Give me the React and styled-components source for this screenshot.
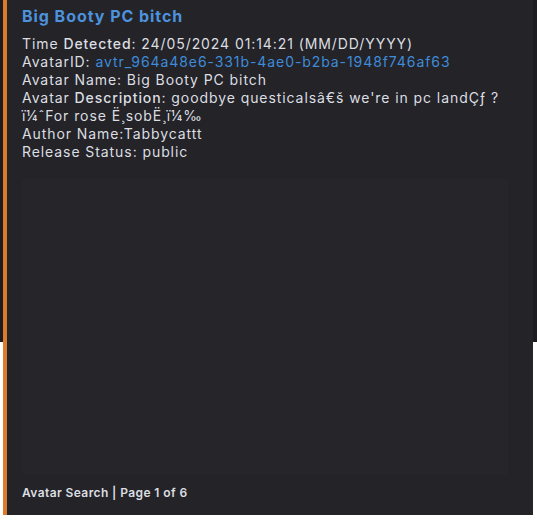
import React from "react";
import styled, { createGlobalStyle } from "styled-components";

const Global = createGlobalStyle`
  html, body { margin: 0; padding: 0; }
  body {
    background: linear-gradient(#1d1d21 0, #1d1d21 342px, #ffffff 342px);
    min-height: 521px;
    font-family: Inter, "Noto Sans", sans-serif;
  }
`;

const Page = styled.div`
  width: 537px;
  height: 521px;
  padding-left: 3px;
  box-sizing: border-box;
`;

const Card = styled.article`
  width: 530px;
  height: 515px;
  box-sizing: border-box;
  background: #232328;
  border-left: 4px solid #db7b2c;
  padding: 5px 16px 0 15px;
  display: flex;
  flex-direction: column;
  -webkit-font-smoothing: antialiased;
`;

const Title = styled.div`
  color: #4d92dd;
  font-weight: 700;
  font-size: 16px;
  line-height: 22px;
  letter-spacing: 0.95px;
`;

const Fields = styled.div`
  margin-top: 7.5px;
  color: #dcdee1;
  font-size: 14px;
  line-height: 18.1px;
  letter-spacing: 0.92px;
`;

const Line = styled.div`
  white-space: nowrap;
`;

const Strong = styled.span`
  font-weight: 500;
`;

const Link = styled.span`
  color: #3f8bd9;
`;

const ImageBox = styled.div`
  margin-top: 18px;
  width: 486px;
  height: 296px;
  background: #25252a;
  border-radius: 3px;
`;

const Footer = styled.div`
  margin-top: 10px;
  color: #dcdee1;
  font-size: 12px;
  font-weight: 600;
  line-height: 16px;
  letter-spacing: 0.4px;
`;

export default function App() {
  return (
    <Page>
      <Global />
      <Card>
        <Title>Big Booty PC bitch</Title>
        <Fields>
          <Line>Time <Strong>Detected</Strong>: 24/05/2024 01:14:21 (MM/DD/YYYY)</Line>
          <Line>AvatarID: <Link>avtr_964a48e6-331b-4ae0-b2ba-1948f746af63</Link></Line>
          <Line>Avatar Name: Big Booty PC bitch</Line>
          <Line>Avatar <Strong>Description</Strong>: goodbye questicalsâ€š we're in pc landÇƒ ?</Line>
          <Line>ï¼ˆFor rose Ë¸sobË¸ï¼‰</Line>
          <Line>Author Name:Tabbycattt</Line>
          <Line>Release Status: public</Line>
        </Fields>
        <ImageBox />
        <Footer>Avatar Search | Page 1 of 6</Footer>
      </Card>
    </Page>
  );
}
